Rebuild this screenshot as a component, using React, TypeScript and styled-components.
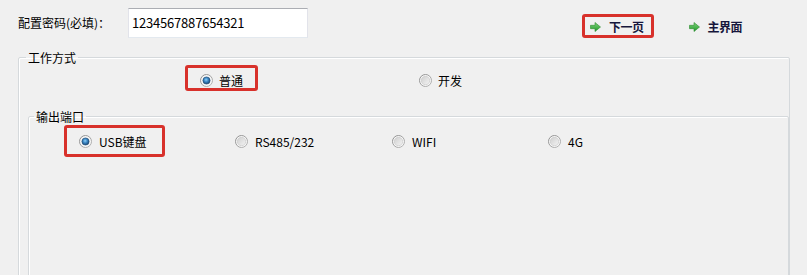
import React from "react";
import styled, { createGlobalStyle } from "styled-components";

const Global = createGlobalStyle`
  html, body {
    margin: 0;
    padding: 0;
    background: #f0f0f0;
  }
  body {
    font-family: "Noto Sans CJK SC", "Microsoft YaHei", sans-serif;
    font-size: 12px;
    color: #000;
  }
`;

const Page = styled.div`
  width: 807px;
  height: 275px;
  overflow: hidden;
  box-sizing: border-box;
  padding: 8px 0 0 18px;
  background: #f0f0f0;
`;

const TopBar = styled.div`
  display: flex;
  align-items: center;
  height: 30px;
`;

const FieldLabel = styled.span`
  width: 110px;
  font-size: 12px;
  line-height: 14px;
`;

const TextBox = styled.div`
  width: 180px;
  height: 30px;
  box-sizing: border-box;
  background: #fff;
  border: 1px solid #e2e3ea;
  border-top-color: #abadb3;
  border-bottom-color: #e3e9ef;
  display: flex;
  align-items: center;
  padding: 0 3px 1px;
  font-size: 13px;
  letter-spacing: -0.2px;
`;

const Nav = styled.div`
  display: flex;
  align-self: flex-start;
  margin-left: 274px;
  margin-top: 6px;
  gap: 27px;
`;

const NavButton = styled.div<{ $boxed?: boolean }>`
  height: 24px;
  box-sizing: border-box;
  display: flex;
  align-items: center;
  gap: 8px;
  padding: 1px 7px 0 5px;
  border: 3px solid ${(p) => (p.$boxed ? "#d8312b" : "transparent")};
  border-radius: 3px;
  font-weight: bold;
  font-size: 12px;
  color: #16163c;
  letter-spacing: -0.5px;
`;

const Group = styled.fieldset<{ $indent?: number; $width: number; $gapTop: number }>`
  margin: ${(p) => p.$gapTop}px 0 0 ${(p) => p.$indent ?? 0}px;
  width: ${(p) => p.$width}px;
  box-sizing: border-box;
  padding: 0;
  min-inline-size: 0;
  border: 1px solid #d5d9dc;
  border-radius: 2px;
  box-shadow: inset 1px 1px 0 #fff;
`;

const GroupTitle = styled.legend<{ $offset: number }>`
  margin-left: ${(p) => p.$offset}px;
  padding: 0 2px;
  font-size: 12px;
  line-height: 15px;
  height: 15px;
`;

const OptionRow = styled.div<{ $cols: string; $lead: number; $height: number; $top?: number }>`
  display: grid;
  grid-template-columns: ${(p) => p.$cols};
  padding-left: ${(p) => p.$lead}px;
  height: ${(p) => p.$height}px;
  margin-top: ${(p) => p.$top ?? 0}px;
  align-items: stretch;
`;

const Option = styled.label<{ $marked?: boolean; $pad: string; $gap: number }>`
  display: flex;
  align-items: center;
  justify-self: start;
  box-sizing: border-box;
  gap: ${(p) => p.$gap}px;
  padding: ${(p) => p.$pad};
  margin-left: -15px;
  border: 3px solid ${(p) => (p.$marked ? "#d8312b" : "transparent")};
  border-radius: 3px;
  font-size: 12px;
  line-height: 13px;
  white-space: nowrap;
`;

const OuterBody = styled.div`
  height: 260px;
`;

const InnerBody = styled.div`
  height: 200px;
`;

const Radio: React.FC<{ checked?: boolean; id: string }> = ({ checked, id }) => (
  <svg width="13" height="13" viewBox="0 0 13 13">
    <defs>
      <linearGradient id={`ring-${id}`} x1="0" y1="0" x2="1" y2="1">
        <stop offset="0" stopColor="#8a8a8a" />
        <stop offset="1" stopColor="#b8b8b8" />
      </linearGradient>
      <linearGradient id={`in-${id}`} x1="0" y1="0" x2="1" y2="1">
        <stop offset="0" stopColor="#cfcfcf" />
        <stop offset="1" stopColor="#f4f4f4" />
      </linearGradient>
      <radialGradient id={`dot-${id}`} cx="0.45" cy="0.4" r="0.65">
        <stop offset="0" stopColor="#8fd0f6" />
        <stop offset="0.45" stopColor="#3b86c4" />
        <stop offset="1" stopColor="#163e66" />
      </radialGradient>
    </defs>
    <circle cx="6.5" cy="6.5" r="6" fill="#f6f6f6" stroke={`url(#ring-${id})`} strokeWidth="1" />
    {checked ? (
      <circle cx="6.5" cy="6.5" r="3.6" fill={`url(#dot-${id})`} stroke="#1d4a74" strokeWidth="0.6" />
    ) : (
      <circle cx="6.5" cy="6.5" r="4.2" fill={`url(#in-${id})`} stroke="#c6c6c6" strokeWidth="0.6" />
    )}
  </svg>
);

const GreenArrow: React.FC<{ id: string }> = ({ id }) => (
  <svg width="11" height="10" viewBox="0 0 11 10">
    <defs>
      <linearGradient id={`ga-${id}`} x1="0" y1="0" x2="0" y2="1">
        <stop offset="0" stopColor="#7fd27a" />
        <stop offset="1" stopColor="#1f9a2a" />
      </linearGradient>
    </defs>
    <path d="M0.5 3.3 H5 V0.5 L10.5 5 L5 9.5 V6.7 H0.5 Z" fill={`url(#ga-${id})`} stroke="#2a8a2e" strokeWidth="0.6" />
  </svg>
);

export default function App() {
  return (
    <>
      <Global />
      <Page>
        <TopBar>
          <FieldLabel>配置密码(必填)：</FieldLabel>
          <TextBox>1234567887654321</TextBox>
          <Nav>
            <NavButton $boxed>
              <GreenArrow id="a" />
              下一页
            </NavButton>
            <NavButton>
              <GreenArrow id="b" />
              主界面
            </NavButton>
          </Nav>
        </TopBar>

        <Group $width={772} $gapTop={12}>
          <GroupTitle $offset={7}>工作方式</GroupTitle>
          <OuterBody>
            <OptionRow $cols="219px 219px" $lead={181} $height={26} $top={0}>
              <Option $marked $pad="5px 12px 0 12px" $gap={6}>
                <Radio checked id="m1" />
                普通
              </Option>
              <Option $pad="5px 12px 0 12px" $gap={6}>
                <Radio id="m2" />
                开发
              </Option>
            </OptionRow>

            <Group $indent={9} $width={761} $gapTop={18}>
              <GroupTitle $offset={5}>输出端口</GroupTitle>
              <InnerBody>
                <OptionRow $cols="156px 157px 156px 156px" $lead={50} $height={32} $top={1}>
                  <Option $marked $pad="7px 15px 6px 12px" $gap={7}>
                    <Radio checked id="p1" />
                    USB键盘
                  </Option>
                  <Option $pad="7px 15px 6px 12px" $gap={7}>
                    <Radio id="p2" />
                    RS485/232
                  </Option>
                  <Option $pad="7px 15px 6px 12px" $gap={7}>
                    <Radio id="p3" />
                    WIFI
                  </Option>
                  <Option $pad="7px 15px 6px 12px" $gap={7}>
                    <Radio id="p4" />
                    4G
                  </Option>
                </OptionRow>
              </InnerBody>
            </Group>
          </OuterBody>
        </Group>
      </Page>
    </>
  );
}
